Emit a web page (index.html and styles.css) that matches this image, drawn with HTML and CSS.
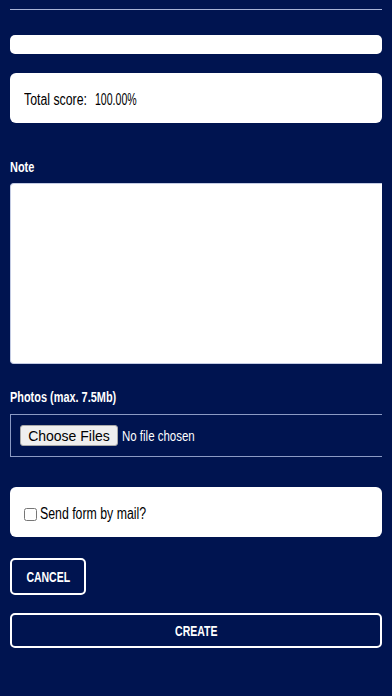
FILE: index.html
```html
<!DOCTYPE html>
<html>
<head>
<meta charset="utf-8">
<link rel="stylesheet" href="styles.css">
</head>
<body>
<div class="page">
  <div class="rule"></div>
  <div class="bar"></div>
  <div class="card score-card"><span class="sx score-label">Total score:</span><span class="sx score-value">100.00%</span></div>
  <label class="label note-label"><span class="sx lbl">Note</span></label>
  <textarea class="note"></textarea>
  <label class="label photos-label"><span class="sx lbl">Photos (max. 7.5Mb)</span></label>
  <div class="file-box">
    <button class="choose" type="button">Choose Files</button>
    <span class="sx no-file">No file chosen</span>
  </div>
  <div class="card mail-card">
    <input type="checkbox" class="check" id="mail">
    <label for="mail" class="sx mail-text">Send form by mail?</label>
  </div>
  <div class="actions">
    <button class="btn cancel" type="button"><span class="sx btn-text">CANCEL</span></button>
    <button class="btn create" type="button"><span class="sx btn-text">CREATE</span></button>
  </div>
</div>
</body>
</html>
```

FILE: styles.css
```css
html, body {
  margin: 0;
  padding: 0;
  background: #001450;
}
body {
  font-family: "Liberation Sans", Arial, sans-serif;
  color: #fff;
}
.page {
  padding: 0 10px;
}
.sx {
  display: inline-block;
  transform-origin: left center;
  white-space: nowrap;
}
.rule {
  margin-top: 9px;
  height: 1px;
  background: #a8b3d6;
}
.bar {
  margin-top: 25px;
  height: 19px;
  background: #fff;
  border-radius: 5px;
}
.card {
  background: #fff;
  border-radius: 6px;
  color: #000;
  display: flex;
  align-items: center;
}
.score-card {
  margin-top: 19px;
  height: 50px;
  padding: 4px 14px 0;
  box-sizing: border-box;
  font-size: 16px;
}
.score-label {
  transform: scaleX(0.77);
}
.score-value {
  margin-left: -11px;
  transform: scaleX(0.66);
}
.label {
  display: block;
  font-size: 14px;
  font-weight: bold;
  line-height: 16px;
  color: #fff;
}
.lbl {
  transform: scaleX(0.78);
}
.note-label {
  margin-top: 36px;
}
.note {
  display: block;
  margin: 8px 0 0;
  width: 100%;
  height: 181px;
  box-sizing: border-box;
  border: 1px solid #c3cbe3;
  border-right: none;
  border-radius: 4px 0 0 4px;
  background: #fff;
  resize: none;
}
.photos-label {
  margin-top: 25px;
}
.file-box {
  margin-top: 9px;
  height: 43px;
  box-sizing: border-box;
  border: 1px solid #8b9ac4;
  border-right: none;
  padding: 0 9px;
  display: flex;
  align-items: center;
}
.choose {
  font-family: "Liberation Sans", Arial, sans-serif;
  font-size: 14px;
  height: 21px;
  width: 98px;
  padding: 0;
  border: 1px solid #a9a9a9;
  border-radius: 3px;
  background: #efefef;
  color: #000;
}
.no-file {
  margin-left: 4px;
  font-size: 14px;
  color: #fff;
  transform: scaleX(0.82);
}
.mail-card {
  margin-top: 30px;
  height: 50px;
  padding: 4px 14px 0;
  box-sizing: border-box;
}
.check {
  margin: 0 3px 0 0;
  width: 13px;
  height: 13px;
}
.mail-text {
  font-size: 16px;
  color: #000;
  transform: scaleX(0.77);
}
.actions {
  margin-top: 21px;
  display: flex;
  flex-direction: column;
  align-items: flex-start;
  gap: 18px;
}
.btn {
  background: transparent;
  color: #fff;
  border: 2px solid #fff;
  border-radius: 5px;
  font-family: "Liberation Sans", Arial, sans-serif;
  font-size: 15px;
  font-weight: bold;
  padding: 0;
  display: flex;
  align-items: center;
  justify-content: center;
}
.btn-text {
  transform-origin: center center;
  transform: scaleX(0.7);
}
.cancel {
  width: 76px;
  height: 37px;
}
.create {
  width: 100%;
  height: 35px;
}
```
